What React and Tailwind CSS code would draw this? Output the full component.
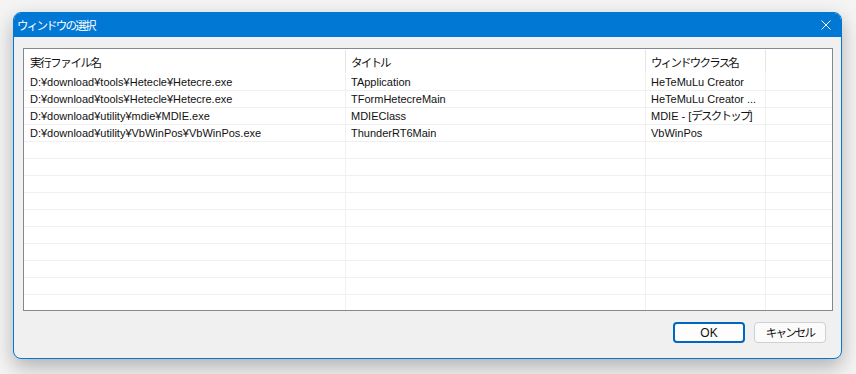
import React from "react";

const J = ({ children, t = "tracking-[-1.5px]" }) => (
  <span className={`text-[11.5px] ${t}`} style={{ fontFamily: '"Noto Sans CJK JP", sans-serif' }}>
    {children}
  </span>
);

const rows = [
  ["D:¥download¥tools¥Hetecle¥Hetecre.exe", "TApplication", "HeTeMuLu Creator"],
  ["D:¥download¥tools¥Hetecle¥Hetecre.exe", "TFormHetecreMain", "HeTeMuLu Creator ..."],
  ["D:¥download¥utility¥mdie¥MDIE.exe", "MDIEClass", <>MDIE - [<J t="tracking-[-1.8px]">デスクトップ</J>]</>],
  ["D:¥download¥utility¥VbWinPos¥VbWinPos.exe", "ThunderRT6Main", "VbWinPos"],
];

const empty = Array.from({ length: 10 }, () => ["", "", ""]);

export default function App() {
  const all = [...rows, ...empty];
  return (
    <div
      className="w-[856px] h-[374px] bg-[#f4f4f4] pt-[12px] pl-[13px] overflow-hidden"
      style={{ fontFamily: '"Liberation Sans", "Noto Sans CJK JP", sans-serif' }}
    >
      <div className="w-[829px] h-[347px] rounded-[8px] border border-[#0078d4] bg-[#f0f0f0] flex flex-col overflow-hidden shadow-[0_8px_20px_rgba(0,0,0,0.28)]">
        <div className="h-[24px] bg-[#0078d4] flex items-center justify-between pl-[3px] pr-[9px] shrink-0">
          <span className="text-white leading-none">
            <J t="tracking-[-1.8px]">ウィンドウの選択</J>
          </span>
          <svg width="10" height="10" viewBox="0 0 10 10" className="mr-[1px]">
            <path d="M0.5 0.5 L9.5 9.5 M9.5 0.5 L0.5 9.5" stroke="white" strokeWidth="1" />
          </svg>
        </div>
        <div className="flex flex-col pl-[9px] pt-[11px]">
          <div className="w-[810px] h-[263px] border border-[#828790] bg-white overflow-hidden text-[11px] text-[#111]">
            <div className="grid grid-cols-[321px_300px_120px_1fr] h-[25px]">
              <div className="flex items-center pl-[6px] pt-[2px]"><J t="tracking-[-1.4px]">実行ファイル名</J></div>
              <div className="flex items-center pl-[5px] pt-[2px] border-l border-[#e5e5e5] my-[1px]"><J t="tracking-[-1.8px]">タイトル</J></div>
              <div className="flex items-center pl-[5px] pt-[2px] border-l border-[#e5e5e5] my-[1px]"><J t="tracking-[-1.8px]">ウィンドウクラス名</J></div>
              <div className="border-l border-[#e5e5e5] my-[1px]"></div>
            </div>
            {all.map((r, i) => (
              <div key={i} className="grid grid-cols-[321px_300px_120px_1fr] h-[17px] border-b border-[#f0f0f0]">
                <div className="flex items-center pl-[6px] leading-none whitespace-nowrap overflow-hidden">{r[0]}</div>
                <div className="flex items-center pl-[5px] border-l border-[#f0f0f0] leading-none whitespace-nowrap overflow-hidden">{r[1]}</div>
                <div className="flex items-center pl-[5px] border-l border-[#f0f0f0] leading-none whitespace-nowrap overflow-hidden">{r[2]}</div>
                <div className="border-l border-[#f0f0f0]"></div>
              </div>
            ))}
          </div>
          <div className="flex justify-end gap-[9px] pr-[15px] pt-[11px]">
            <button className="w-[72px] h-[21px] rounded-[4px] border-2 border-[#0067c0] bg-[#fdfdfd] text-[12px] text-[#111] flex items-center justify-center leading-none">OK</button>
            <button className="w-[72px] h-[21px] rounded-[4px] border border-[#d0d0d0] bg-[#fbfbfb] text-[12px] text-[#111] flex items-center justify-center leading-none">
              <J t="tracking-[-1.8px]">キャンセル</J>
            </button>
          </div>
        </div>
      </div>
    </div>
  );
}
